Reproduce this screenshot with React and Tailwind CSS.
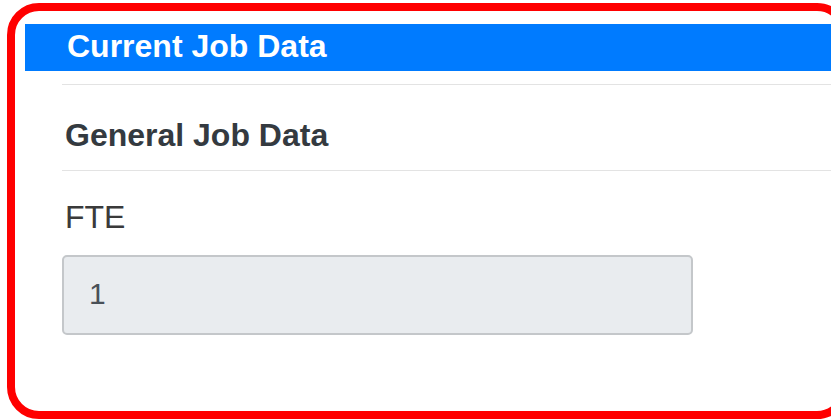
export default function App() {
  return (
    <div
      className="w-[831px] h-[419px] overflow-hidden bg-white"
      style={{ fontFamily: '"Liberation Sans", Arial, sans-serif' }}
    >
      <div className="ml-[7px] mt-[3px] w-[842px] h-[416px] border-8 border-[#ff0000] rounded-[32px] bg-white pt-[13px] px-[10px]">
        {/* card header */}
        <div className="h-[47px] bg-[#007bff] pl-[42px] pb-[3px] flex items-center">
          <h2 className="text-white text-[32px] font-bold leading-none">
            Current Job Data
          </h2>
        </div>

        <div className="pl-[37px]">
          <div className="mt-[13px] border-t border-[#e3e3e3]" />
          <h3 className="mt-[34px] mb-[19px] pl-[3px] text-[32px] leading-[32px] font-bold text-[#343a40]">
            General Job Data
          </h3>
          <div className="border-t border-[#e3e3e3]" />

          <label className="block mt-[30px] pl-[3px] text-[32px] leading-[32px] text-[#3a3a3a]">
            FTE
          </label>
          <div className="mt-[22px] w-[631px] h-[80px] rounded-[5px] border-2 border-[#c4c7ca] bg-[#e9ecef] flex items-center pl-[25px] pb-[4px] text-[30px] text-[#495057]">
            1
          </div>
        </div>
      </div>
    </div>
  );
}
